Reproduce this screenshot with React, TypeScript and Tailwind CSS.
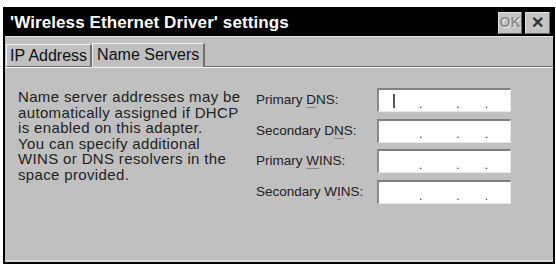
import React from 'react';

const fields = [
  { pre: 'Primary ', key: 'D', post: 'NS:', caret: true },
  { pre: 'Secondary D', key: 'N', post: 'S:', caret: false },
  { pre: 'Primary ', key: 'W', post: 'INS:', caret: false },
  { pre: 'Secondary W', key: 'I', post: 'NS:', caret: false },
];

const lines = [
  'Name server addresses may be',
  'automatically assigned if DHCP',
  'is enabled on this adapter.',
  'You can specify additional',
  'WINS or DNS resolvers in the',
  'space provided.',
];

function IpBox({ caret }: { caret: boolean }) {
  return (
    <div className="h-[24px] w-[134px] bg-white border-t-2 border-l-2 border-t-[#808080] border-l-[#8a8a8a] border-b border-r border-b-[#e8e8e8] border-r-[#e8e8e8] flex items-center text-[12px] text-[#333] leading-none">
      <span className="w-[40px] pl-[14px] flex items-center">
        {caret && <span className="block w-[2px] h-[14px] bg-[#555]" />}
      </span>
      <span className="mt-[6px]">.</span>
      <span className="w-[34px]" />
      <span className="mt-[6px]">.</span>
      <span className="w-[25px]" />
      <span className="mt-[6px]">.</span>
    </div>
  );
}

export default function App() {
  return (
    <div className="w-[556px] h-[265px] bg-white pt-[7px] pl-[3px] pr-[1px] pb-[1px] font-['Liberation_Sans',Arial,sans-serif]">
      <div className="h-full border-2 border-black bg-[#c0c0c0] flex flex-col">
        {/* title bar */}
        <div className="h-[27px] bg-black flex items-center pl-[5px] pr-[3px]">
          <span className="text-white font-bold text-[17px] tracking-[0.1px] flex-1">
            'Wireless Ethernet Driver' settings
          </span>
          <div className="flex gap-[3px]">
            <div className="w-[24px] h-[22px] bg-[#c4c4c4] border border-t-[#e0e0e0] border-l-[#e0e0e0] border-b-[#6a6a6a] border-r-[#6a6a6a] flex items-center justify-center text-[14px] font-bold text-[#8e8e8e] [text-shadow:1px_1px_0_#eee]">
              OK
            </div>
            <div className="w-[25px] h-[22px] bg-[#c4c4c4] border border-t-[#e0e0e0] border-l-[#e0e0e0] border-b-[#6a6a6a] border-r-[#6a6a6a] flex items-center justify-center text-[16px] font-bold text-[#333]">
              ✕
            </div>
          </div>
        </div>
        <div className="h-[1px] bg-[#e4e4e4]" />
        {/* tabs */}
        <div className="flex items-end pt-[6px] pl-[1px]">
          <div className="h-[23px] px-[3px] border-t border-l border-r-2 border-t-[#f0f0f0] border-l-[#f0f0f0] border-r-[#707070] border-b border-b-[#707070] text-[16px] text-[#111] leading-[21px]">
            IP Address
          </div>
          <div className="h-[24px] px-[4px] border-t border-l border-r-2 border-t-[#f0f0f0] border-l-[#f0f0f0] border-r-[#707070] text-[16px] text-[#111] leading-[22px]">
            Name Servers
          </div>
          <div className="flex-1 h-[1px] bg-[#707070]" />
        </div>
        {/* panel */}
        <div className="flex-1 border-t border-t-[#f4f4f4] pt-[21px] pl-[13px] flex">
          <p className="w-[238px] text-[15px] tracking-[0.35px] leading-[15.5px] text-[#222] whitespace-nowrap">
            {lines.map((l, i) => (
              <span key={i} className="block">{l}</span>
            ))}
          </p>
          <div className="flex flex-col gap-[6.7px] -mt-[1px]">
            {fields.map((f, i) => (
              <div key={i} className="flex items-center">
                <span className="w-[121px] text-[13.5px] text-[#222]">
                  {f.pre}
                  <span className="underline decoration-[#888] underline-offset-[3px]">{f.key}</span>
                  {f.post}
                </span>
                <IpBox caret={f.caret} />
              </div>
            ))}
          </div>
        </div>
        <div className="h-[2px] bg-[#d8d8d8]" />
      </div>
    </div>
  );
}
